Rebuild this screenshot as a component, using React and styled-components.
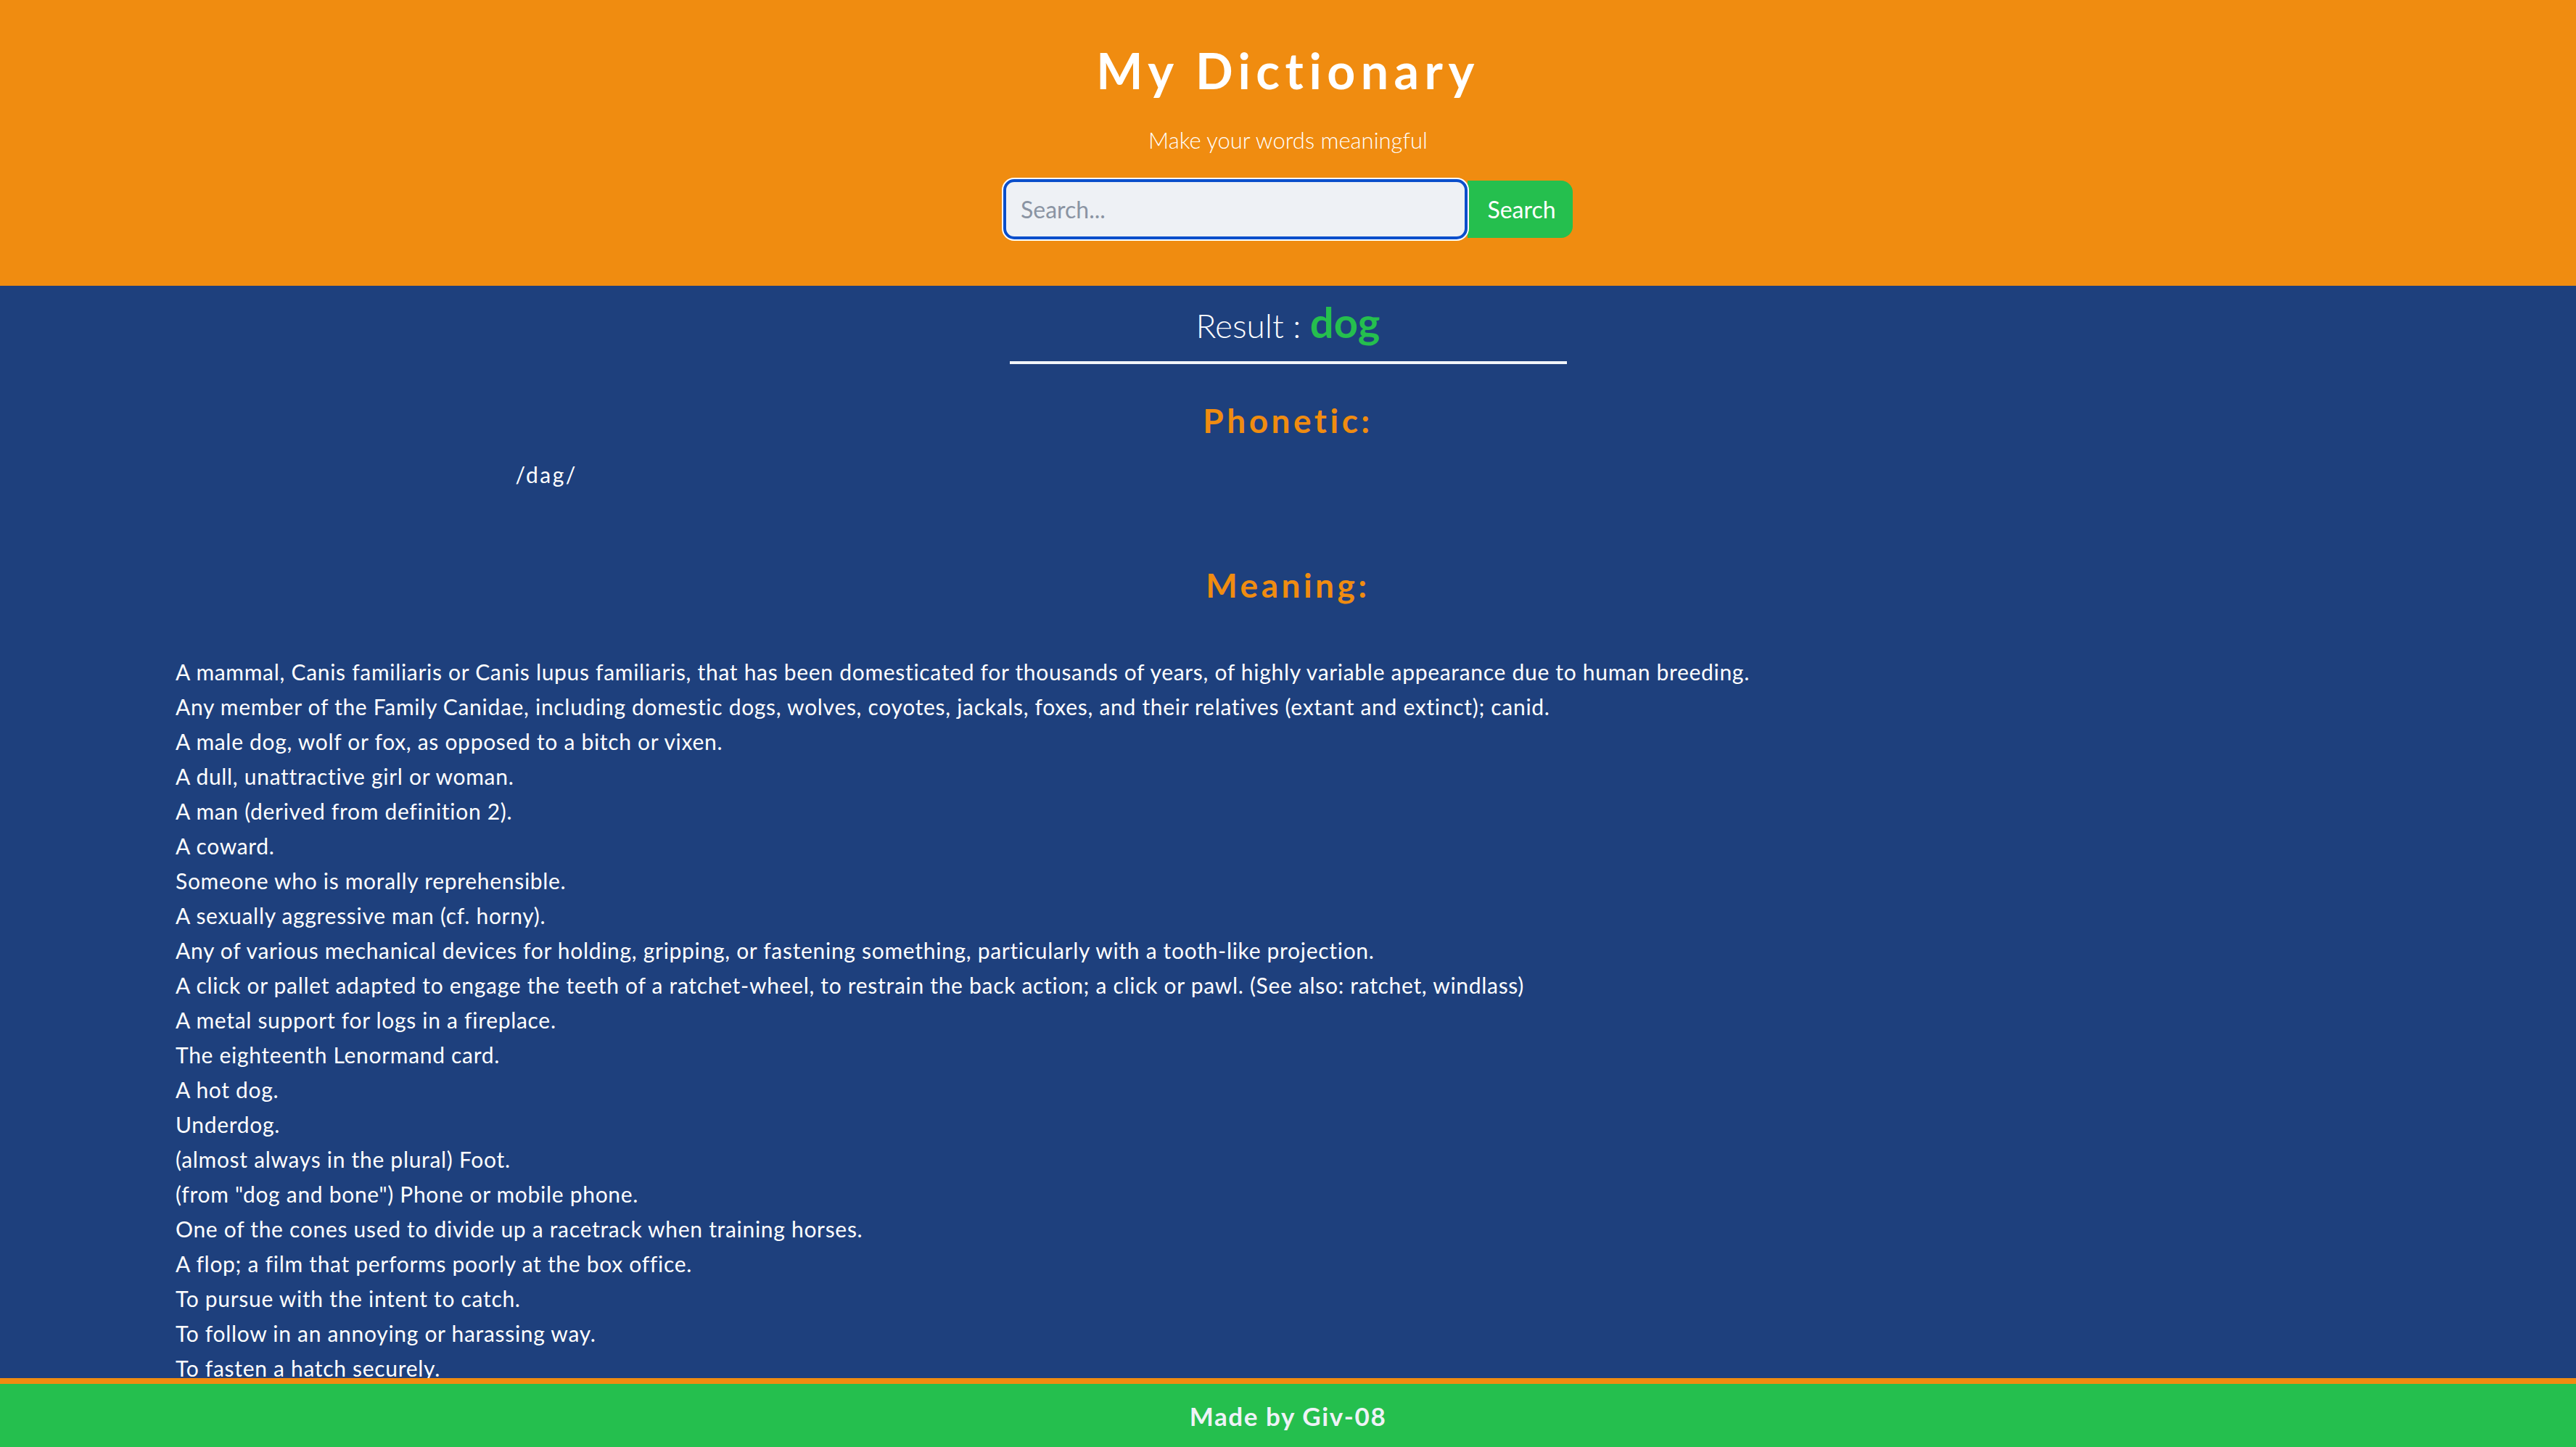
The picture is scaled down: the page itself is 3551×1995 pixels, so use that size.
import styled, { createGlobalStyle } from 'styled-components';

const GlobalStyle = createGlobalStyle`
  * {
    box-sizing: border-box;
  }

  body {
    margin: 0;
    font-family: Lato, 'Open Sans', sans-serif;
    background: #1e407d;
    color: #ffffff;
  }
`;

const Header = styled.header`
  background: #f08c10;
  height: 394px;
  padding-top: 63px;
  display: flex;
  flex-direction: column;
  align-items: center;
`;

const Title = styled.h1`
  margin: 0;
  font-size: 68px;
  line-height: 68px;
  font-weight: 700;
  letter-spacing: 7.5px;
  color: #ffffff;
`;

const Tagline = styled.p`
  margin: 47px 0 0;
  font-size: 31px;
  line-height: 31px;
  font-weight: 300;
`;

const SearchForm = styled.form`
  margin-top: 38px;
  display: flex;
  align-items: center;
`;

const SearchInput = styled.input`
  width: 640px;
  height: 83px;
  border: 4px solid #0b4fcb;
  border-radius: 15px;
  box-shadow: 0 0 0 2px #ffffff;
  background: #eef1f5;
  padding: 0 20px;
  font-family: inherit;
  font-size: 32px;
  color: #1f2937;
  outline: none;
  position: relative;
  z-index: 1;

  &::placeholder {
    color: #8a94a3;
  }
`;

const SearchButton = styled.button`
  width: 145px;
  height: 79px;
  border: none;
  border-radius: 0 16px 16px 0;
  background: #25bf4e;
  color: #ffffff;
  font-family: inherit;
  font-size: 32px;
  padding: 0 0 0 4px;
  cursor: pointer;
`;

const Main = styled.main`
  padding: 21px 242px 140px;
`;

const ResultHeading = styled.h2`
  width: 768px;
  margin: 0 auto;
  padding-bottom: 25px;
  border-bottom: 4px solid #f1f5f9;
  text-align: center;
  font-size: 46px;
  line-height: 1;
  font-weight: 300;
`;

const Word = styled.span`
  font-size: 58px;
  font-weight: 700;
  color: #25bf4e;
`;

const SectionTitle = styled.h3`
  margin: ${(p) => p.$top}px 0 0;
  text-align: center;
  font-size: 46px;
  line-height: 46px;
  font-weight: 700;
  letter-spacing: 4.5px;
  color: #f08c10;
`;

const PhoneticGrid = styled.div`
  display: grid;
  grid-template-columns: repeat(3, 1fr);
  margin-top: 34px;
`;

const Phonetic = styled.p`
  margin: 0;
  text-align: center;
  font-size: 30px;
  line-height: 34px;
  letter-spacing: 2.5px;
`;

const Definitions = styled.ul`
  list-style: none;
  margin: 72px 0 0;
  padding: 0;
`;

const Definition = styled.li`
  font-size: 30px;
  line-height: 48px;
  letter-spacing: 0.7px;
`;

const Footer = styled.footer`
  position: fixed;
  left: 0;
  right: 0;
  bottom: 0;
  height: 95px;
  border-top: 8px solid #f08c10;
  background: #25bf4e;
  display: flex;
  align-items: center;
  justify-content: center;
  font-size: 35px;
  font-weight: 700;
  letter-spacing: 1.6px;
  color: #eef2f7;
`;

const definitions = [
  'A mammal, Canis familiaris or Canis lupus familiaris, that has been domesticated for thousands of years, of highly variable appearance due to human breeding.',
  'Any member of the Family Canidae, including domestic dogs, wolves, coyotes, jackals, foxes, and their relatives (extant and extinct); canid.',
  'A male dog, wolf or fox, as opposed to a bitch or vixen.',
  'A dull, unattractive girl or woman.',
  'A man (derived from definition 2).',
  'A coward.',
  'Someone who is morally reprehensible.',
  'A sexually aggressive man (cf. horny).',
  'Any of various mechanical devices for holding, gripping, or fastening something, particularly with a tooth-like projection.',
  'A click or pallet adapted to engage the teeth of a ratchet-wheel, to restrain the back action; a click or pawl. (See also: ratchet, windlass)',
  'A metal support for logs in a fireplace.',
  'The eighteenth Lenormand card.',
  'A hot dog.',
  'Underdog.',
  '(almost always in the plural) Foot.',
  '(from "dog and bone") Phone or mobile phone.',
  'One of the cones used to divide up a racetrack when training horses.',
  'A flop; a film that performs poorly at the box office.',
  'To pursue with the intent to catch.',
  'To follow in an annoying or harassing way.',
  'To fasten a hatch securely.',
  'To watch, or participate, in sexual activity in a public place.',
  'To intentionally restrict one\'s productivity as employee; to work at the slowest rate that goes unpunished.',
  'To criticize.',
];

export default function App() {
  return (
    <>
      <GlobalStyle />
      <Header>
        <Title>My Dictionary</Title>
        <Tagline>Make your words meaningful</Tagline>
        <SearchForm onSubmit={(e) => e.preventDefault()}>
          <SearchInput type="text" placeholder="Search..." autoFocus />
          <SearchButton type="submit">Search</SearchButton>
        </SearchForm>
      </Header>
      <Main>
        <ResultHeading>
          Result : <Word>dog</Word>
        </ResultHeading>
        <SectionTitle $top={55}>Phonetic:</SectionTitle>
        <PhoneticGrid>
          <Phonetic>/dag/</Phonetic>
        </PhoneticGrid>
        <SectionTitle $top={113}>Meaning:</SectionTitle>
        <Definitions>
          {definitions.map((d) => (
            <Definition key={d}>{d}</Definition>
          ))}
        </Definitions>
      </Main>
      <Footer>Made by Giv-08</Footer>
    </>
  );
}
